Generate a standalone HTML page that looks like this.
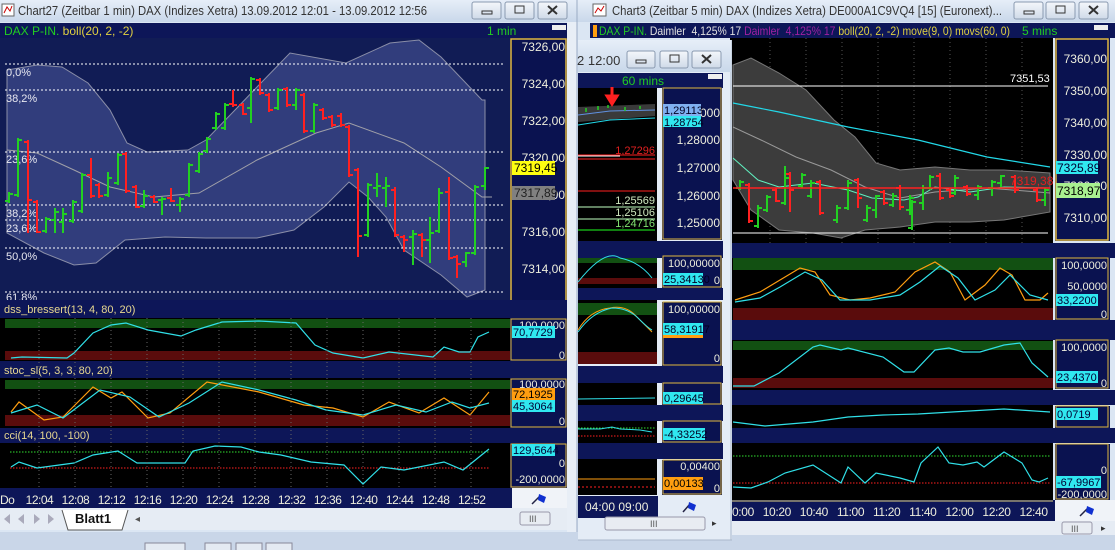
<!DOCTYPE html>
<html><head><meta charset="utf-8"><style>
html,body{margin:0;padding:0;background:#c8d6e8;}
svg{display:block;font-family:"Liberation Sans",sans-serif;}
</style></head><body>
<svg width="1115" height="550" viewBox="0 0 1115 550" xmlns="http://www.w3.org/2000/svg">
<defs>
<linearGradient id="tb" x1="0" y1="0" x2="0" y2="1"><stop offset="0" stop-color="#e6eef8"/><stop offset="1" stop-color="#c9d8ea"/></linearGradient>
<linearGradient id="btn" x1="0" y1="0" x2="0" y2="1"><stop offset="0" stop-color="#f4f7fb"/><stop offset="1" stop-color="#cfdae8"/></linearGradient>
</defs>
<rect width="1115" height="550" fill="#c8d6e8"/>

<!-- ================= LEFT WINDOW ================= -->
<rect x="0" y="0" width="578" height="532" fill="#dbe6f3"/>
<rect x="0" y="0" width="578" height="22" fill="url(#tb)"/>
<rect x="2" y="4" width="12" height="12" fill="#fff" stroke="#666"/><path d="M4 13 L7 7 L10 11 L12 6" stroke="#c00" fill="none"/>
<text x="18" y="15" font-size="12.5" fill="#333" textLength="409" lengthAdjust="spacingAndGlyphs">Chart27 (Zeitbar 1 min)  DAX (Indizes Xetra) 13.09.2012 12:01 - 13.09.2012 12:56</text>
<g stroke="#8a9ab0" fill="url(#btn)"><rect x="472" y="2" width="29" height="17" rx="2"/><rect x="505" y="2" width="29" height="17" rx="2"/><rect x="538" y="2" width="29" height="17" rx="2"/></g>
<rect x="482" y="11" width="10" height="3" fill="none" stroke="#333"/><rect x="515" y="6" width="9" height="7" fill="none" stroke="#333"/>
<path d="M548 6 L557 14 M557 6 L548 14" stroke="#333" stroke-width="2"/>

<rect x="0" y="23" width="567" height="15" fill="#0d1658"/>
<text x="4" y="35" font-size="12"><tspan fill="#22cc22">DAX P-IN.</tspan><tspan fill="#e0d040"> boll(20, 2, -2)</tspan></text>
<text x="487" y="35" font-size="12" fill="#22cc22">1 min</text>
<rect x="552" y="25" width="14" height="5" fill="#eee"/>

<rect x="0" y="38" width="510" height="262" fill="#111c55"/>
<path d="M7 70 L37 65 L62 67 L88 83 L110 110 L127 143 L147 152 L188 150 L206 140 L235 110 L257 87 L290 53 L346 63 L390 43 L419 40 L441 57 L482 100 L485 100 L485 290 L467 297 L441 275 L404 250 L386 217 L368 197 L349 182 L324 207 L294 230 L257 238 L206 238 L165 237 L125 240 L96 263 L74 265 L44 253 L7 233 Z" fill="#313d7c" stroke="#8a8ea8" stroke-width="1"/>
<polyline points="7,150 37,153 74,170 110,187 154,197 199,193 257,160 316,133 349,123 404,143 441,167 482,197 492,197" fill="none" stroke="#a0a0a8" stroke-width="1"/>
<g stroke="#ffffff" stroke-dasharray="2,2" stroke-width="1">
<line x1="5" y1="64" x2="505" y2="64"/><line x1="5" y1="90" x2="505" y2="90"/><line x1="5" y1="152" x2="505" y2="152"/><line x1="5" y1="205" x2="505" y2="205"/><line x1="5" y1="220" x2="505" y2="220"/><line x1="5" y1="248" x2="505" y2="248"/><line x1="5" y1="292" x2="505" y2="292"/>
</g>
<g font-size="11" fill="#e8e8f0">
<text x="6" y="76">0,0%</text><text x="6" y="102">38,2%</text><text x="6" y="163">23,6%</text><text x="6" y="217">38,2%</text><text x="6" y="232">23,6%</text><text x="6" y="260">50,0%</text><text x="6" y="301">61,8%</text>
</g>
<path fill="none" stroke="#22d022" stroke-width="2" d="
M9 192V203M5 201H9M9 194H13 M18 138V197M14 195H18M18 140H22 M46 217V233M42 231H46M46 219H50 M55 208V233M51 220H55M55 212H59 M63 208V233M59 222H63M63 214H67 M73 200V223M69 221H73M73 202H77 M82 173V213M78 211H82M82 175H86 M108 172V197M104 195H108M108 178H112 M118 153V185M114 183H118M118 155H122 M144 190V208M140 206H144M144 196H148 M162 197V215M158 200H162M162 199H166 M180 197V212M176 205H180M180 199H184 M189 163V197M185 195H189M189 165H193 M199 152V173M195 171H199M199 154H203 M207 137V153M203 151H207M207 139H211 M216 112V130M212 128H216M216 114H220 M225 103V130M221 128H225M225 105H229 M251 77V123M247 108H251M251 79H255 M278 88V110M274 108H278M278 90H282 M296 88V110M292 105H296M296 90H300 M314 103V133M310 131H314M314 105H318 M368 183V237M364 235H368M368 185H372 M377 173V197M373 188H377M377 186H381 M386 177V207M382 188H386M386 186H390 M413 230V265M409 237H413M413 234H417 M430 217V263M426 240H430M430 233H434 M439 188V233M435 231H439M439 193H443 M466 252V267M462 262H466M466 253H470 M475 185V255M471 253H475M475 187H479 M485 167V190M481 186H485M485 168H489"/>
<path fill="none" stroke="#ff2020" stroke-width="2" d="
M28 140V233M24 142H28M28 200H32 M37 200V233M33 202H37M37 232H41 M91 158V198M87 175H91M91 196H95 M99 183V198M95 185H99M99 196H103 M126 152V193M122 154H126M126 191H130 M136 185V208M132 187H136M136 207H140 M154 195V203M150 197H154M154 202H158 M171 188V202M167 198H171M171 201H175 M233 90V107M229 104H233M233 105H237 M243 103V115M239 105H243M243 114H247 M260 78V95M256 80H260M260 93H264 M269 93V112M265 95H269M269 110H273 M287 87V107M283 89H287M287 105H291 M304 93V133M300 95H304M304 131H308 M323 108V120M319 110H323M323 118H327 M332 115V127M328 117H332M332 125H336 M341 113V127M337 116H341M341 125H345 M349 125V177M345 127H349M349 175H353 M358 168V257M354 170H358M358 236H362 M395 187V237M391 190H395M395 235H399 M404 235V252M400 237H404M404 240H408 M422 233V257M418 235H422M422 240H426 M449 177V260M445 192H449M449 258H453 M457 255V278M453 257H457M457 264H461"/>

<rect x="510" y="38" width="57" height="262" fill="#0a1250"/>
<rect x="511" y="39" width="55" height="262" fill="none" stroke="#e0b840" stroke-width="1.5"/>
<g font-size="12" fill="#eeeedd" text-anchor="end"><text x="565" y="51">7326,00</text><text x="565" y="88">7324,00</text><text x="565" y="125">7322,00</text><text x="565" y="162">7320,00</text><text x="565" y="199">7318,00</text><text x="565" y="236">7316,00</text><text x="565" y="273">7314,00</text></g>
<rect x="512" y="161" width="43" height="14" fill="#ffff10"/><text x="514" y="172" font-size="12" fill="#000">7319,45</text>
<rect x="512" y="186" width="43" height="14" fill="#808080"/><text x="514" y="197" font-size="12" fill="#202020">7317,89</text>

<rect x="0" y="300" width="567" height="18" fill="#0d1658"/>
<text x="4" y="313" font-size="11" fill="#e8d890">dss_bressert(13, 4, 80, 20)</text>
<rect x="0" y="318" width="510" height="43" fill="#000"/>
<rect x="5" y="319" width="505" height="9" fill="#125012"/><rect x="5" y="351" width="505" height="9" fill="#5a0c0c"/>
<polyline fill="none" stroke="#30e0e8" stroke-width="1.2" points="11,358 22,357 67,358 74,353 93,333 111,325 126,323 148,330 181,336 196,330 222,322 259,321 296,323 315,345 333,353 363,358 389,352 433,357 444,347 459,352 470,352 478,337 489,332"/>
<rect x="510" y="318" width="57" height="43" fill="#0a1250"/><rect x="511" y="319" width="55" height="41" fill="none" stroke="#e0b840"/>
<text x="565" y="329" font-size="11" fill="#eeeedd" text-anchor="end">100,0000</text>
<rect x="512" y="326" width="43" height="12" fill="#30e8f0"/><text x="513" y="336" font-size="11" fill="#003">70,7729</text>
<text x="565" y="359" font-size="11" fill="#eeeedd" text-anchor="end">0</text>

<rect x="0" y="361" width="567" height="17" fill="#0d1658"/>
<text x="4" y="374" font-size="11" fill="#e8d890">stoc_sl(5, 3, 3, 80, 20)</text>
<rect x="0" y="378" width="510" height="50" fill="#000"/>
<rect x="5" y="380" width="505" height="9" fill="#125012"/><rect x="5" y="415" width="505" height="11" fill="#5a0c0c"/>
<polyline fill="none" stroke="#ff9e10" stroke-width="1.2" points="11,412 19,402 44,420 63,417 93,387 111,398 122,392 148,418 170,413 207,382 259,392 304,405 333,408 363,417 389,402 419,413 444,398 470,415 489,392"/>
<polyline fill="none" stroke="#30e0e8" stroke-width="1.2" points="11,413 37,405 63,418 100,390 130,397 159,417 189,403 222,382 259,390 296,400 326,410 363,415 396,405 426,412 452,402 470,408 489,403"/>
<rect x="510" y="378" width="57" height="50" fill="#0a1250"/><rect x="511" y="379" width="55" height="48" fill="none" stroke="#e0b840"/>
<text x="565" y="388" font-size="11" fill="#eeeedd" text-anchor="end">100,0000</text>
<rect x="512" y="388" width="43" height="12" fill="#ff9e10"/><text x="513" y="398" font-size="11" fill="#000">72,1925</text>
<rect x="512" y="400" width="43" height="12" fill="#30e8f0"/><text x="513" y="410" font-size="11" fill="#003">45,3064</text>
<text x="565" y="425" font-size="11" fill="#eeeedd" text-anchor="end">0</text>

<rect x="0" y="428" width="567" height="15" fill="#0d1658"/>
<text x="4" y="439" font-size="11" fill="#e8d890">cci(14, 100, -100)</text>
<rect x="0" y="443" width="510" height="45" fill="#000"/>
<line x1="10" y1="452" x2="490" y2="452" stroke="#30e030" stroke-dasharray="1.5,1.5"/>
<line x1="10" y1="468" x2="490" y2="468" stroke="#ff2020" stroke-dasharray="1.5,1.5"/>
<polyline fill="none" stroke="#30e0e8" stroke-width="1.2" points="11,467 19,462 37,468 74,463 93,455 118,451 137,463 185,463 193,451 215,446 241,447 259,452 281,455 311,462 344,465 363,484 381,467 404,470 444,462 463,470 489,449"/>
<rect x="510" y="443" width="57" height="45" fill="#0a1250"/><rect x="511" y="444" width="55" height="43" fill="none" stroke="#e0b840"/>
<rect x="512" y="444" width="43" height="12" fill="#30e8f0"/><text x="513" y="454" font-size="11" fill="#003">129,5644</text>
<text x="565" y="467" font-size="11" fill="#eeeedd" text-anchor="end">0</text>
<text x="565" y="483" font-size="11" fill="#eeeedd" text-anchor="end">-200,0000</text>
<g stroke="#666" stroke-dasharray="1,3"><line x1="39" y1="318" x2="39" y2="488"/><line x1="75" y1="318" x2="75" y2="488"/><line x1="111" y1="318" x2="111" y2="488"/><line x1="147" y1="318" x2="147" y2="488"/><line x1="183" y1="318" x2="183" y2="488"/><line x1="219" y1="318" x2="219" y2="488"/><line x1="255" y1="318" x2="255" y2="488"/><line x1="291" y1="318" x2="291" y2="488"/><line x1="327" y1="318" x2="327" y2="488"/><line x1="363" y1="318" x2="363" y2="488"/><line x1="399" y1="318" x2="399" y2="488"/><line x1="435" y1="318" x2="435" y2="488"/><line x1="471" y1="318" x2="471" y2="488"/></g>

<rect x="0" y="488" width="512" height="20" fill="#0d1658"/>
<text x="0" y="504" font-size="12" fill="#eeeedd" xml:space="preserve" textLength="486" lengthAdjust="spacing">Do    12:04   12:08   12:12   12:16   12:20   12:24   12:28   12:32   12:36   12:40   12:44   12:48   12:52</text>
<rect x="512" y="488" width="55" height="20" fill="#f0f3f8"/>
<path d="M532 504 L540 496" stroke="#224" stroke-width="1.5"/><path d="M539 494 L546 497 L544 503 L538 500Z" fill="#1030d0"/>
<rect x="0" y="508" width="567" height="22" fill="#e6ecf4"/>
<g fill="#aab"><path d="M4 519 L10 514 L10 524Z"/><path d="M18 519 L24 514 L24 524Z"/><path d="M34 514 L40 519 L34 524Z"/><path d="M48 514 L54 519 L48 524Z"/></g>
<path d="M62 510 L68 530 L122 530 L128 510" fill="#fff" stroke="#555"/>
<text x="75" y="523" font-size="13" font-weight="bold" fill="#111">Blatt1</text>
<text x="135" y="522" font-size="10" fill="#555">◂</text>
<rect x="520" y="512" width="30" height="13" rx="2" fill="#e8ecf2" stroke="#99a"/><text x="529" y="522" font-size="9" fill="#555">III</text>
<rect x="567" y="22" width="10" height="510" fill="#e8eef6"/><line x1="577" y1="0" x2="577" y2="535" stroke="#9aabc4"/>
<rect x="0" y="532" width="1115" height="18" fill="#c9d6e8"/>
<rect x="145" y="543" width="40" height="10" fill="#e4eaf2" stroke="#889"/><rect x="205" y="543" width="26" height="10" fill="#e4eaf2" stroke="#889"/><rect x="236" y="543" width="26" height="10" fill="#e4eaf2" stroke="#889"/><rect x="266" y="543" width="26" height="10" fill="#e4eaf2" stroke="#889"/>

<!-- ================= RIGHT WINDOW ================= -->
<rect x="578" y="0" width="537" height="535" fill="#dbe6f3"/>
<rect x="578" y="0" width="537" height="22" fill="url(#tb)"/>
<rect x="593" y="4" width="13" height="12" fill="#fff" stroke="#666"/><path d="M595 13 L598 8 L601 11 L604 6" stroke="#c00" fill="none"/>
<text x="612" y="15" font-size="12.5" fill="#333" textLength="390" lengthAdjust="spacingAndGlyphs">Chart3 (Zeitbar 5 min)  DAX (Indizes Xetra) DE000A1C9VQ4 [15] (Euronext)...</text>
<g stroke="#8a9ab0" fill="url(#btn)"><rect x="1014" y="2" width="29" height="17" rx="2"/><rect x="1046" y="2" width="29" height="17" rx="2"/><rect x="1079" y="2" width="29" height="17" rx="2"/></g>
<rect x="1024" y="11" width="10" height="3" fill="none" stroke="#333"/><rect x="1056" y="6" width="9" height="7" fill="none" stroke="#333"/>
<path d="M1089 6 L1098 14 M1098 6 L1089 14" stroke="#333" stroke-width="2"/>
<rect x="590" y="23" width="525" height="15" fill="#0d1658"/>
<rect x="593" y="25" width="4" height="12" fill="#ff9e10"/>
<text x="599" y="35" font-size="12" xml:space="preserve" textLength="411" lengthAdjust="spacingAndGlyphs"><tspan fill="#22cc22">DAX P-IN.</tspan><tspan fill="#e0e0e0"> Daimler  4,125% 17 </tspan><tspan fill="#a020a0">Daimler  4,125% 17 </tspan><tspan fill="#e0d040">boll(20, 2, -2) move(9, 0) movs(60, 0)</tspan></text>
<text x="1022" y="35" font-size="12" fill="#22cc22">5 mins</text>
<rect x="1094" y="25" width="14" height="5" fill="#eee"/>

<rect x="730" y="38" width="323" height="205" fill="#000"/>
<g stroke="#555" stroke-dasharray="1,3"><line x1="770" y1="38" x2="770" y2="500"/><line x1="806" y1="38" x2="806" y2="500"/><line x1="842" y1="38" x2="842" y2="500"/><line x1="878" y1="38" x2="878" y2="500"/><line x1="914" y1="38" x2="914" y2="500"/><line x1="950" y1="38" x2="950" y2="500"/><line x1="986" y1="38" x2="986" y2="500"/><line x1="1022" y1="38" x2="1022" y2="500"/></g>
<path d="M733 65 L751 58 L779 73 L806 90 L834 120 L855 137 L876 163 L900 170 L935 167 L970 170 L1004 170 L1050 173 L1050 212 L1004 220 L970 222 L935 222 L900 227 L865 230 L841 238 L813 233 L779 230 L751 210 L733 180 Z" fill="#3c3c3c" stroke="#777"/>
<line x1="733" y1="86" x2="1048" y2="86" stroke="#fff"/><line x1="733" y1="233" x2="1048" y2="233" stroke="#fff"/>
<text x="1010" y="82" font-size="11" fill="#fff">7351,53</text>
<polyline fill="none" stroke="#22d8e8" stroke-width="1.2" points="733,103 779,112 848,127 918,140 987,157 1050,167"/>
<polyline fill="none" stroke="#999" points="733,127 761,140 796,157 831,170 865,187 900,198 935,192 987,188 1050,193"/>
<polyline fill="none" stroke="#60f0c0" points="733,158 758,180 779,187 813,183 848,190 872,198 904,200 918,197 935,187 970,192 1004,187 1050,188"/>
<path fill="none" stroke="#22d022" stroke-width="2" d="M740 180V190M736 188H740M740 182H744 M758 205V228M754 226H758M758 208H762 M767 195V212M763 210H767M767 197H771 M785 166V205M781 203H785M785 178H789 M802 173V188M798 186H802M802 175H806 M811 180V198M807 196H811M811 183H815 M837 205V223M833 220H837M837 208H841 M848 180V210M844 208H848M848 183H852 M867 205V222M863 220H867M867 208H871 M876 195V218M872 210H876M876 196H880 M893 193V207M889 205H893M893 196H897 M910 195V215M906 210H910M910 198H914 M912 200V230M908 228H912M912 202H916 M923 185V210M919 203H923M923 188H927 M930 175V190M926 188H930M930 177H934 M955 175V195M951 193H955M955 178H959 M978 185V200M974 195H978M978 187H982 M992 180V196M988 188H992M992 182H996 M1001 175V187M997 183H1001M1001 176H1005 M1045 188V206M1041 200H1045M1045 190H1049"/>
<path fill="none" stroke="#ff2020" stroke-width="2" d="M749 183V223M745 185H749M749 221H753 M776 188V202M772 190H776M776 201H780 M790 172V212M786 174H790M790 190H794 M820 180V215M816 182H820M820 213H824 M858 178V208M854 180H858M858 198H862 M884 190V205M880 192H884M884 203H888 M900 185V210M896 188H900M900 207H904 M940 173V200M936 176H940M940 198H944 M950 188V198M946 190H950M950 196H954 M967 185V196M963 187H967M967 194H971 M1015 175V193M1011 177H1015M1015 190H1019 M1037 188V202M1033 190H1037M1037 200H1041"/>
<line x1="733" y1="188" x2="1050" y2="188" stroke="#ff2020" stroke-width="1.5"/>
<text x="1010" y="185" font-size="12" fill="#e02020">7319,38</text>
<rect x="1055" y="38" width="55" height="203" fill="#0a1250"/><rect x="1056" y="39" width="52" height="201" fill="none" stroke="#e0b840" stroke-width="1.5"/>
<g font-size="12" fill="#eeeedd" text-anchor="end"><text x="1107" y="63">7360,00</text><text x="1107" y="95">7350,00</text><text x="1107" y="127">7340,00</text><text x="1107" y="159">7330,00</text><text x="1107" y="190">7320,00</text><text x="1107" y="222">7310,00</text></g>
<rect x="1056" y="161" width="42" height="13" fill="#30e8f0"/><text x="1057" y="172" font-size="12" fill="#003">7325,89</text>
<rect x="1056" y="183" width="44" height="15" fill="#a8f090"/><text x="1057" y="195" font-size="12" fill="#000">7318,97</text>

<rect x="730" y="243" width="385" height="15" fill="#0d1658"/>
<rect x="730" y="258" width="323" height="62" fill="#000"/>
<rect x="733" y="258" width="320" height="12" fill="#125012"/><rect x="733" y="308" width="320" height="12" fill="#5a0c0c"/>
<polyline fill="none" stroke="#ff9e10" stroke-width="1.2" points="735,300 760,292 780,280 800,268 815,272 830,295 850,300 870,298 895,292 915,272 935,262 950,272 965,300 985,285 1000,268 1012,275 1025,300 1040,300 1048,293"/>
<polyline fill="none" stroke="#30e0e8" stroke-width="1.2" points="735,302 760,298 780,287 805,272 822,280 840,300 870,300 900,295 920,282 940,266 958,278 975,300 995,290 1010,275 1030,295 1048,300"/>
<rect x="1055" y="258" width="55" height="62" fill="#0a1250"/><rect x="1056" y="258" width="52" height="61" fill="none" stroke="#e0b840"/>
<text x="1107" y="269" font-size="11" fill="#eeeedd" text-anchor="end">100,0000</text>
<text x="1107" y="290" font-size="11" fill="#eeeedd" text-anchor="end">50,0000</text>
<rect x="1056" y="294" width="42" height="12" fill="#30e8f0"/><text x="1057" y="304" font-size="11" fill="#003">33,2200</text>
<text x="1107" y="318" font-size="11" fill="#eeeedd" text-anchor="end">0</text>

<rect x="730" y="320" width="385" height="20" fill="#0d1658"/>
<rect x="730" y="340" width="323" height="50" fill="#000"/>
<rect x="733" y="341" width="320" height="9" fill="#125012"/><rect x="733" y="378" width="320" height="10" fill="#5a0c0c"/>
<polyline fill="none" stroke="#30e0e8" stroke-width="1.2" points="733,386 754,386 779,373 813,347 820,345 841,350 848,348 883,357 904,372 914,372 935,350 949,348 963,352 980,352 1004,345 1020,343 1032,363 1048,377"/>
<rect x="1055" y="340" width="55" height="49" fill="#0a1250"/><rect x="1056" y="340" width="52" height="48" fill="none" stroke="#e0b840"/>
<text x="1107" y="351" font-size="11" fill="#eeeedd" text-anchor="end">100,0000</text>
<rect x="1056" y="371" width="42" height="12" fill="#30e8f0"/><text x="1057" y="381" font-size="11" fill="#003">23,4370</text>
<text x="1107" y="387" font-size="11" fill="#eeeedd" text-anchor="end">0</text>

<rect x="730" y="390" width="385" height="15" fill="#0d1658"/>
<rect x="730" y="405" width="323" height="23" fill="#000"/>
<polyline fill="none" stroke="#30e0e8" stroke-width="1.2" points="733,422 765,426 813,422 848,417 883,415 918,414 952,412 1004,409 1050,412"/>
<rect x="1055" y="406" width="55" height="22" fill="#0a1250"/><rect x="1056" y="406" width="52" height="21" fill="none" stroke="#e0b840"/>
<rect x="1056" y="408" width="42" height="12" fill="#30e8f0"/><text x="1057" y="418" font-size="11" fill="#003">0,0719</text>

<rect x="730" y="428" width="385" height="15" fill="#0d1658"/>
<rect x="730" y="443" width="323" height="57" fill="#000"/>
<line x1="733" y1="456" x2="1050" y2="456" stroke="#30e030" stroke-dasharray="1.5,1.5"/>
<line x1="733" y1="483" x2="1050" y2="483" stroke="#ff2020" stroke-dasharray="1.5,1.5"/>
<polyline fill="none" stroke="#30e0e8" stroke-width="1.2" points="733,487 751,488 768,482 785,473 813,465 841,483 848,467 865,483 876,473 900,478 914,482 921,463 938,447 949,463 963,465 977,462 984,467 1004,452 1022,463 1032,480 1039,482 1048,478"/>
<rect x="1055" y="444" width="55" height="56" fill="#0a1250"/><rect x="1056" y="444" width="52" height="55" fill="none" stroke="#e0b840"/>
<text x="1107" y="474" font-size="11" fill="#eeeedd" text-anchor="end">0</text>
<rect x="1056" y="476" width="45" height="12" fill="#30e8f0"/><text x="1057" y="486" font-size="11" fill="#003">-67,9967</text>
<text x="1107" y="498" font-size="11" fill="#eeeedd" text-anchor="end">-200,0000</text>

<rect x="730" y="500" width="325" height="21" fill="#0d1658"/>
<line x1="730" y1="501" x2="1053" y2="501" stroke="#e0d080"/>
<text x="732" y="516" font-size="12" fill="#eeeedd" xml:space="preserve" textLength="316" lengthAdjust="spacing">0:00   10:20   10:40   11:00   11:20   11:40   12:00   12:20   12:40</text>
<rect x="1055" y="500" width="60" height="21" fill="#f0f3f8"/>
<path d="M1080 516 L1088 508" stroke="#224" stroke-width="1.5"/><path d="M1087 506 L1094 509 L1092 515 L1086 512Z" fill="#1030d0"/>
<rect x="730" y="521" width="385" height="14" fill="#e6ecf4"/>
<rect x="1062" y="522" width="30" height="12" rx="2" fill="#e8ecf2" stroke="#99a"/><text x="1071" y="532" font-size="9" fill="#555">III</text>
<text x="1101" y="531" font-size="9" fill="#333">▸</text>

<!-- ================= SMALL WINDOW ================= -->
<rect x="578" y="40" width="154" height="500" fill="#e4ecf6"/>
<line x1="731" y1="40" x2="731" y2="540" stroke="#aab8cc"/>
<rect x="578" y="40" width="153" height="32" fill="url(#tb)"/>
<text x="577" y="65" font-size="13" fill="#333">2 12:00</text>
<g stroke="#8a9ab0" fill="url(#btn)"><rect x="627" y="51" width="28" height="17" rx="2"/><rect x="660" y="51" width="28" height="17" rx="2"/><rect x="692" y="51" width="29" height="17" rx="2"/></g>
<rect x="636" y="60" width="10" height="3" fill="none" stroke="#333"/><rect x="670" y="55" width="9" height="7" fill="none" stroke="#333"/>
<path d="M702 55 L711 63 M711 55 L702 63" stroke="#333" stroke-width="2"/>
<rect x="578" y="73" width="145" height="15" fill="#0d1658"/>
<text x="622" y="85" font-size="12" fill="#22cc22">60 mins</text>
<rect x="708" y="74" width="14" height="5" fill="#eee"/>
<rect x="578" y="88" width="79" height="153" fill="#000"/>
<path d="M578 107 L655 104 L655 116 L578 122Z" fill="#3a3a3a"/>
<polyline fill="none" stroke="#22d8e8" points="578,125 610,120 655,118"/>
<polyline fill="none" stroke="#6090e0" points="578,115 610,111 655,110"/>
<path d="M586 112V108M598 110V106M608 108V105M625 111V107M640 109V106" stroke="#22d022" stroke-width="1.5"/>
<path d="M612 87V97M607 96L612 104L617 96Z" stroke="#ff2020" fill="#ff2020" stroke-width="3"/>
<line x1="578" y1="155" x2="655" y2="155" stroke="#ff2020"/><line x1="578" y1="159" x2="655" y2="159" stroke="#ff2020"/><line x1="578" y1="156" x2="620" y2="156" stroke="#fff"/><line x1="578" y1="191" x2="655" y2="191" stroke="#ff2020"/>
<line x1="578" y1="207" x2="655" y2="207" stroke="#c0ffc0"/><line x1="578" y1="219" x2="655" y2="219" stroke="#c0ffc0"/><line x1="578" y1="230" x2="655" y2="230" stroke="#20ff20"/>
<g font-size="11" text-anchor="end"><text x="655" y="154" fill="#e02020">1,27296</text><text x="655" y="204" fill="#d0e8c0">1,25569</text><text x="655" y="216" fill="#d0e8c0">1,25106</text><text x="655" y="227" fill="#80e070">1,24716</text></g>
<rect x="662" y="88" width="60" height="152" fill="#0a1250"/><rect x="663" y="88" width="58" height="151" fill="none" stroke="#e0b840"/>
<g font-size="12" fill="#eeeedd" text-anchor="end"><text x="720" y="144">1,28000</text><text x="720" y="172">1,27000</text><text x="720" y="200">1,26000</text><text x="720" y="227">1,25000</text><text x="720" y="117">000</text></g>
<rect x="663" y="104" width="38" height="12" fill="#80b0f0"/><text x="664" y="114" font-size="11" fill="#002">1,29113</text>
<rect x="663" y="116" width="38" height="11" fill="#30e8f0"/><text x="664" y="126" font-size="11" fill="#002">1,28754</text>

<rect x="578" y="241" width="145" height="17" fill="#0d1658"/>
<rect x="578" y="258" width="79" height="30" fill="#000"/>
<rect x="578" y="258" width="79" height="5" fill="#125012"/><rect x="578" y="278" width="79" height="6" fill="#5a0c0c"/>
<path d="M578 282 Q605 248 620 258 Q640 262 652 278" fill="none" stroke="#30e0e8"/>
<rect x="662" y="256" width="60" height="32" fill="#0a1250"/><rect x="663" y="256" width="58" height="31" fill="none" stroke="#e0b840"/>
<text x="720" y="267" font-size="11" fill="#eeeedd" text-anchor="end">100,00000</text>
<rect x="663" y="273" width="40" height="12" fill="#30e8f0"/><text x="664" y="283" font-size="11" fill="#002">25,34130</text>
<text x="720" y="284" font-size="11" fill="#eeeedd" text-anchor="end">0</text>
<rect x="578" y="288" width="145" height="12" fill="#0d1658"/>
<rect x="578" y="300" width="79" height="64" fill="#000"/>
<rect x="578" y="303" width="79" height="12" fill="#125012"/><rect x="578" y="352" width="79" height="12" fill="#5a0c0c"/>
<path d="M578 330 Q590 310 610 308 Q625 305 635 315 Q645 325 652 332" fill="none" stroke="#ff9e10"/>
<path d="M578 332 Q592 312 612 308 Q628 308 638 318 Q648 328 652 330" fill="none" stroke="#30e0e8"/>
<rect x="662" y="302" width="60" height="64" fill="#0a1250"/><rect x="663" y="302" width="58" height="63" fill="none" stroke="#e0b840"/>
<text x="720" y="313" font-size="11" fill="#eeeedd" text-anchor="end">100,00000</text>
<rect x="663" y="323" width="40" height="12" fill="#30e8f0"/><rect x="663" y="335" width="40" height="3" fill="#ff9e10"/><text x="664" y="333" font-size="11" fill="#002">58,31917</text>
<text x="720" y="362" font-size="11" fill="#eeeedd" text-anchor="end">0</text>
<rect x="578" y="366" width="145" height="17" fill="#0d1658"/>
<rect x="578" y="383" width="79" height="22" fill="#000"/><line x1="578" y1="399" x2="655" y2="398" stroke="#30e0e8"/>
<rect x="662" y="383" width="60" height="22" fill="#0a1250"/><rect x="663" y="383" width="58" height="21" fill="none" stroke="#e0b840"/>
<rect x="663" y="392" width="40" height="12" fill="#30e8f0"/><text x="664" y="402" font-size="11" fill="#002">0,29645</text>
<rect x="578" y="405" width="145" height="16" fill="#0d1658"/>
<rect x="578" y="421" width="79" height="22" fill="#000"/>
<line x1="578" y1="428" x2="655" y2="428" stroke="#30e030" stroke-dasharray="1.5,1.5"/><line x1="578" y1="436" x2="655" y2="436" stroke="#ff2020" stroke-dasharray="1.5,1.5"/>
<polyline fill="none" stroke="#30e0e8" points="578,429 600,429 612,427 620,429 640,430 652,432"/>
<rect x="662" y="421" width="60" height="22" fill="#0a1250"/><rect x="663" y="421" width="58" height="21" fill="none" stroke="#e0b840"/>
<rect x="663" y="428" width="42" height="12" fill="#30e8f0"/><text x="664" y="438" font-size="11" fill="#002">-4,33252</text>
<rect x="578" y="443" width="145" height="16" fill="#0d1658"/>
<rect x="578" y="459" width="79" height="36" fill="#000"/>
<line x1="578" y1="479" x2="655" y2="479" stroke="#ff9e10"/><line x1="578" y1="487" x2="655" y2="487" stroke="#ff2020" stroke-dasharray="2,2"/>
<rect x="662" y="460" width="60" height="35" fill="#0a1250"/><rect x="663" y="460" width="58" height="34" fill="none" stroke="#e0b840"/>
<text x="720" y="470" font-size="11" fill="#eeeedd" text-anchor="end">0,00400</text>
<rect x="663" y="477" width="40" height="13" fill="#ff9e10"/><text x="664" y="487" font-size="11" fill="#000">0,00133</text>
<text x="720" y="492" font-size="11" fill="#eeeedd" text-anchor="end">0</text>
<rect x="578" y="496" width="80" height="22" fill="#0d1658"/>
<text x="585" y="511" font-size="12" fill="#eeeedd">04:00 09:00</text>
<path d="M683 512 L690 504" stroke="#224" stroke-width="1.5"/><path d="M689 502 L696 505 L694 511 L688 508Z" fill="#1030d0"/>
<rect x="605" y="517" width="100" height="13" rx="2" fill="#e8ecf2" stroke="#99a"/><text x="650" y="527" font-size="9" fill="#555">III</text>
<text x="712" y="526" font-size="9" fill="#333">▸</text>
<line x1="578" y1="540" x2="732" y2="540" stroke="#aab8cc"/>
</svg>
</body></html>
